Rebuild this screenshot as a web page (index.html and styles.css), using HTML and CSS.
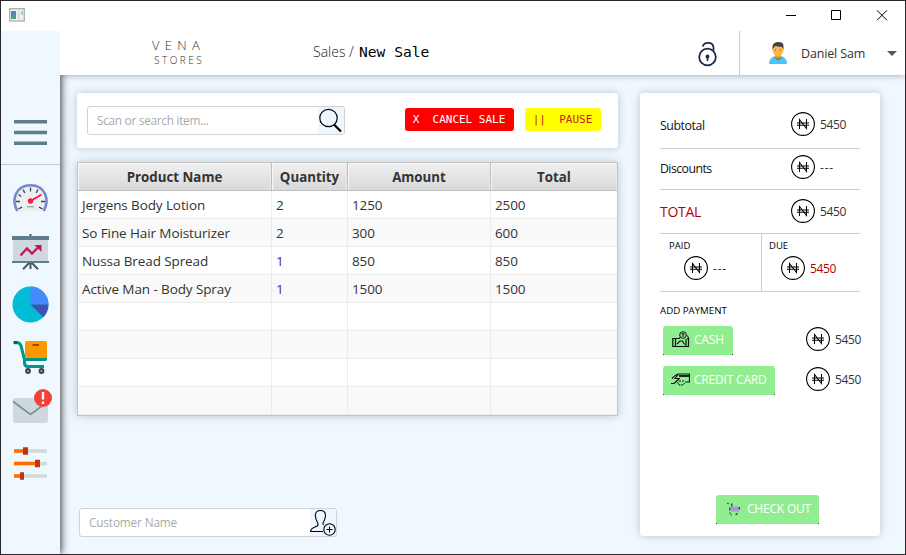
FILE: index.html
```html
<!DOCTYPE html>
<html lang="en">
<head>
<meta charset="utf-8">
<title>New Sale</title>
<link rel="stylesheet" href="styles.css">
</head>
<body>
<svg class="defs" width="0" height="0">
  <symbol id="naira" viewBox="0 0 24 24"><circle cx="12" cy="12" r="11.4" fill="none" stroke="#000" stroke-width="1.1"/><path d="M8.500 17V7.500L15.500 16.500V7M6 11H18M6 13.200H18" fill="none" stroke="#000" stroke-width="1.050"/></symbol>
</svg>
<div class="window">
  <div class="titlebar">
    <svg class="app-icon" width="16" height="14" viewBox="0 0 16 14"><rect x=".7" y=".7" width="14.6" height="12.3" fill="#eef0f2" stroke="#a9adb2" stroke-width="1.3"/><rect x="2" y="3" width="5" height="8" fill="#4a9a94"/><path d="M2 3h5v3L2 8z" fill="#5c86ad"/><rect x="8.5" y="3" width="2.5" height="8" fill="#d9dbdd"/><rect x="12" y="3" width="2" height="4" fill="#9ed0c0"/></svg>
    <svg class="controls" width="112" height="28" viewBox="785 1 112 28" fill="none" stroke="#000"><path d="M786 15.5H796M831.5 10.500H840.500V19.500H831.500ZM877 10.300L887 20.300M887 10.300L877 20.300"/></svg>
  </div>
  <div class="body">
    <nav class="sidebar">
      <svg class="menu" width="59" height="134" viewBox="1 31 59 134"><path d="M14 121.700H47M14 132.500H47M14 143.300H47" stroke="#607d8b" stroke-width="3.500"/></svg>
      <svg width="59" height="60" viewBox="1 165 59 60"><path d="M17.500 211C11 201 15 185.500 30.500 185.500S50 201 43.500 211Z" fill="#eceff1"/><path d="M17.300 211C11 200 15.500 185.300 30.500 185.300S50 200 43.700 211" fill="none" stroke="#7986cb" stroke-width="2.600"/><path d="M30.500 187.500v4M23 189.500l1.800 3.400M38 189.500l-1.800 3.400M18.600 194.500l2.600 2M16 201.500h4M41 201.500h4M18.500 209l3.500-1.800M42.500 209l-3.500-1.800" stroke="#37474f" stroke-width="1.300"/><path d="M30.500 201L41.500 194.500" stroke="#ff1744" stroke-width="1.800"/><circle cx="30.500" cy="201" r="2.700" fill="#ff1744"/><path d="M27 206.700h7" stroke="#90a4ae" stroke-width="1.300"/></svg>
      <svg width="59" height="53" viewBox="1 225 59 53"><path d="M30.500 234v3M30.500 262v7M30 262L23 269.300M31 262l7 7.300" stroke="#455a64" stroke-width="2"/><path d="M13 238H48V263H13z" fill="#cfd8dc"/><path d="M12 236H49v4H12zM12 261H49v2H12z" fill="#607d8b"/><path d="M20.500 255.500L27 248.500L32 253.500L39 246.500" fill="none" stroke="#c2185b" stroke-width="2.300"/><path d="M34.500 245H41.500V252z" fill="#c2185b"/></svg>
      <svg width="59" height="53" viewBox="1 278 59 53"><circle cx="30.500" cy="304.500" r="18" fill="#00bcd4"/><path d="M30.500 304.500V286.500A18 18 0 0 1 48.500 304.500Z" fill="#448aff"/><path d="M30.500 304.500H48.500A18 18 0 0 1 43.200 317.200Z" fill="#3f51b5"/></svg>
      <svg width="59" height="51" viewBox="1 331 59 51"><path d="M26 356H47V359.500Q47 361 45 361H26Z" fill="#009688"/><path d="M14 342.700H17.500Q20 342.700 21 346L24.500 359.500V363Q24.500 366.500 28 366.500H44" fill="none" stroke="#009688" stroke-width="3"/><path d="M13.500 341h4v3h-4z" fill="#00695c"/><rect x="25" y="341" width="22" height="17" rx="1.500" fill="#ff9800"/><path d="M32.500 345H39" stroke="#8f4700" stroke-width="1.800"/><g fill="#90a4ae" stroke="#37474f" stroke-width="1.800"><circle cx="28" cy="371" r="2"/><circle cx="41.500" cy="371" r="2"/></g></svg>
      <svg width="59" height="53" viewBox="1 382 59 53"><rect x="13" y="398" width="35" height="25" rx="2.500" fill="#cfd8dc"/><path d="M13 401.500L30.500 414.500L48 401.500" fill="none" stroke="#78909c" stroke-width="1.600"/><circle cx="43" cy="398" r="9" fill="#f44336"/><path d="M43 392v7.500M43 401.500v2.500" stroke="#fff" stroke-width="2.300"/></svg>
      <svg width="59" height="55" viewBox="1 435 59 55"><path d="M14 451H47M14 463.500H47M14 476H47" stroke="#cfd8dc" stroke-width="3.300"/><path d="M14 451H25M14 463.500H37M14 476H22" stroke="#ff6f00" stroke-width="3.300"/><path d="M23 447.300h5v7.400h-5zM35 459.800h5v7.400h-5zM20 472.300h4v7.400h-4z" fill="#bf360c"/></svg>
    </nav>
    <div class="content">
      <header class="topbar">
        <div class="brand"><div class="brand-name">VENA</div><div class="brand-sub">STORES</div></div>
        <div class="crumbs"><span class="crumb-parent">Sales /</span><span class="crumb-current">New Sale</span></div>
        <svg class="lock" width="24" height="28" viewBox="0 0 24 28" fill="none" stroke="#1c2650" stroke-width="1.800"><circle cx="11.500" cy="17" r="8.300"/><path d="M6.500 6.500Q8 2.800 12 2.800Q17.500 2.800 17.500 7.500V10.500"/><path d="M11.500 16v5" stroke-width="1.600"/><circle cx="11.500" cy="16.500" r="1" fill="#1c2650"/></svg>
        <div class="user">
          <svg class="avatar" width="20" height="24" viewBox="0 0 20 24"><path d="M1 23Q1 17 6 15.500L10 18L14 15.500Q19 17 19 23Z" fill="#4fc3f7"/><path d="M7 13h6v3.500Q10 20 7 16.500z" fill="#ff9800"/><path d="M6 15.700Q10 21 14 15.700" fill="none" stroke="#1579ad" stroke-width="1"/><ellipse cx="10" cy="8.800" rx="5.500" ry="6.200" fill="#ffb74d"/><path d="M4.500 8.500V5Q5.500 1 10.500 1Q15.500 1 15.500 5V8.500L14 6L7 5Z" fill="#424242"/><path d="M7 9h1.200M11.800 9H13" stroke="#784719"/></svg>
          <span class="user-name">Daniel Sam</span><span class="caret"></span>
        </div>
      </header>
      <main class="main">
        <section class="left">
          <div class="card toolbar">
            <div class="field search"><span>Scan or search item...</span><svg width="26" height="27" viewBox="0 0 26 27" fill="none" stroke="#000"><circle cx="10.500" cy="11" r="8.700" stroke-width="1.200"/><path d="M16 17.500L23 24.500" stroke-width="2.200"/></svg></div>
            <button class="btn-mono cancel">X&nbsp; CANCEL SALE</button>
            <button class="btn-mono pause">||&nbsp; PAUSE</button>
          </div>
          <div class="table">
            <div class="row head"><div>Product Name</div><div>Quantity</div><div>Amount</div><div>Total</div></div>
            <div class="row"><div>Jergens Body Lotion</div><div>2</div><div>1250</div><div>2500</div></div>
            <div class="row"><div>So Fine Hair Moisturizer</div><div>2</div><div>300</div><div>600</div></div>
            <div class="row"><div>Nussa Bread Spread</div><div class="one">1</div><div>850</div><div>850</div></div>
            <div class="row"><div>Active Man - Body Spray</div><div class="one">1</div><div>1500</div><div>1500</div></div>
            <div class="row"><div></div><div></div><div></div><div></div></div>
            <div class="row"><div></div><div></div><div></div><div></div></div>
            <div class="row"><div></div><div></div><div></div><div></div></div>
            <div class="row"><div></div><div></div><div></div><div></div></div>
          </div>
          <div class="field customer"><span>Customer Name</span><svg width="26" height="27" viewBox="0 0 26 27" fill="none" stroke="#000" stroke-width="1.100"><path d="M13 22.500H.7Q.5 20 3 19L7 17Q8.800 16 7.500 13.500Q5.500 10 5.300 6.500Q5.500 1.500 10.500 1.500T15.500 6.500Q15.300 10 13.500 13Q12.500 15 13.500 16"/><circle cx="19.500" cy="20.500" r="5.700" fill="#eef6ff"/><path d="M19.500 17.500v6M16.500 20.500h6"/></svg></div>
        </section>
        <aside class="card summary">
          <div class="line l1"><span class="label">Subtotal</span><svg class="coin"><use href="#naira"/></svg><span class="num">5450</span></div>
          <div class="line l2"><span class="label discounts">Discounts</span><svg class="coin"><use href="#naira"/></svg><span class="num dash">---</span></div>
          <div class="line l3"><span class="label total">TOTAL</span><svg class="coin"><use href="#naira"/></svg><span class="num">5450</span></div>
          <div class="split">
            <div class="half paid"><div class="cap">PAID</div><div class="money"><svg class="coin"><use href="#naira"/></svg><span class="num dash">---</span></div></div>
            <div class="half due"><div class="cap">DUE</div><div class="money"><svg class="coin"><use href="#naira"/></svg><span class="num red">5450</span></div></div>
          </div>
          <div class="add">ADD PAYMENT</div>
          <div class="pay"><button class="green cash"><svg width="18" height="17" viewBox="0 0 18 17" fill="none" stroke="#111" stroke-width="1"><path d="M7 7.500H.8v8h15.700v-8H15M3.500 8v7M14 8v7M5 13l3-3h2.500l2 3.500" stroke-width="1.200"/><circle cx="11" cy="4" r="3.300"/><path d="M11 2v4M9.500 3h3M14.500 4l2.500 3-2 1M8 6l-1 2"/></svg><span>CASH</span></button><svg class="coin"><use href="#naira"/></svg><span class="num">5450</span></div>
          <div class="pay"><button class="green credit"><svg width="19" height="13" viewBox="0 0 19 13" fill="none" stroke="#111" stroke-width="1"><path d="M0 10.500H3L8 6M1 5.500Q5 1 8 1H18.500V9H14M7.500 1L4 5.500H9" stroke-width="1.200"/><path d="M8 3h10" stroke-width="1.800"/><path d="M6.500 9l1.500 3h4l1.500-2M8 8h2M11 8h2" stroke-dasharray="2 .6"/></svg><span>CREDIT CARD</span></button><svg class="coin"><use href="#naira"/></svg><span class="num">5450</span></div>
          <button class="green checkout"><svg width="14" height="14" viewBox="0 0 14 14"><path d="M3 4.500H12V9.500H4z" fill="#a49bcf"/><path d="M.5 1l1 1M4.800 1.500v3M12.300 5v2.500M2.800 5.500v3M3 10.500v1.200M3.500 13h1.300M8.500 12.500h1.300M10 11v1.200" fill="none" stroke="#222" stroke-width="1.100"/></svg><span>CHECK OUT</span></button>
        </aside>
      </main>
    </div>
  </div>
</div>
</body>
</html>
```
FILE: styles.css
```css
* { box-sizing: border-box; }
body { margin: 0; font-family: "Open Sans", "Noto Sans", sans-serif; color: #333; }
button { border: 0; padding: 0; font: inherit; }
svg { display: block; flex: none; }
.defs { position: absolute; }
.window { width: 906px; height: 555px; border: 1px solid #29292d; display: flex; flex-direction: column; background: #fff; overflow: hidden; }
.titlebar { height: 30px; flex: none; display: flex; justify-content: space-between; padding: 0 8px; }
.app-icon { margin-top: 7px; }
.body { flex: 1; display: flex; min-height: 0; }
.sidebar { position: relative; width: 59px; flex: none; background: #f0f8ff; box-shadow: 1px 0 8px #333; clip-path: inset(0 -12px 0 0); }
.menu + svg { box-shadow: 0 -1px #c8c8c8; }
.content { flex: 1; display: flex; flex-direction: column; min-width: 0; background: #f0f8ff; }
.topbar { position: relative; height: 44px; flex: none; background: #fff; display: flex; box-shadow: 0 1px 6px rgba(0,0,0,.28); clip-path: inset(0 0 -10px 0); z-index: 1; }
.brand { width: 253px; padding: 5px 0 0 92px; font-weight: 300; color: #333; white-space: nowrap; }
.brand-name { font-size: 13px; line-height: 18px; letter-spacing: 5.3px; }
.brand-sub { font-size: 10px; line-height: 13px; letter-spacing: 2.500px; padding-left: 2px; }
.crumbs { width: 383px; display: flex; align-items: baseline; line-height: 42px; white-space: nowrap; }
.crumb-parent { font-size: 14px; font-weight: 300; width: 46px; color: #222; }
.crumb-current { font-family: "DejaVu Sans Mono", monospace; font-size: 14.600px; color: #000; }
.lock { margin-top: 9px; }
.user { margin-left: 19px; flex: 1; border-left: 1px solid #ccc; display: flex; align-items: center; padding-left: 28px; }
.user-name { font-size: 12.500px; margin-left: 13px; width: 86px; letter-spacing: -.15px; white-space: nowrap; }
.caret { border: 5px solid transparent; border-top-color: #555; border-bottom: 0; }
.main { flex: 1; display: flex; padding: 18px 0 0 17px; gap: 22px; }
.card { background: #fff; border-radius: 3px; box-shadow: 0 0 9px rgba(60,80,100,.3); }
.left { width: 541px; flex: none; }
.toolbar { height: 55px; display: flex; padding: 13px 0 0 10px; }
.field { width: 258px; height: 29px; background: #fff; border: 1px solid #d2d2d2; border-radius: 3px; display: flex; justify-content: space-between; overflow: hidden; font-size: 11.800px; line-height: 27px; color: #aaa; padding-left: 9px; letter-spacing: -.27px; }
.customer span { letter-spacing: -.15px; }
.field svg { background: #eef6ff; }
.btn-mono { font-family: "DejaVu Sans Mono", monospace; font-size: 11px; height: 23px; line-height: 22px; border-radius: 3px; margin-top: 2px; white-space: pre; }
.cancel { background: #f00; color: #fff; width: 109px; margin-left: 60px; padding-right: 1px; }
.pause { background: #ff0; color: #c51a1a; width: 76px; margin-left: 11px; padding-right: 1px; }
.table { margin-top: 14px; height: 254px; border: 1px solid #c4c4c4; background: #fff; box-shadow: 0 0 9px rgba(60,80,100,.3); }
.row { display: grid; grid-template-columns: 194px 76px 143px 1fr; height: 28px; font-size: 13.500px; line-height: 25px; }
.row > div { border-right: 1px solid #ececec; border-bottom: 1px solid #ececec; padding: 2px 4px 0; white-space: nowrap; letter-spacing: -.1px; }
.row > div:last-child { border-right: 0; }
.row:nth-child(odd) { background: #f9f9f9; }
.row > .one { color: #452d80; }
.row.head { background: linear-gradient(#f0f0f0, #d8d8d8); font-weight: 700; font-size: 13.300px; }
.row.head > div { text-align: center; letter-spacing: 0; border-color: #bfbfbf; box-shadow: inset 1px 1px #f6f6f6, inset -1px 0 #e8e8e8; }
.customer { margin: 92px 0 0 2px; }
.summary { width: 240px; height: 443px; padding: 14px 20px 0; }
.line { display: flex; align-items: center; border-bottom: 1px solid #ccc; color: #333; }
.l1 { height: 42px; padding-bottom: 7px; }
.l2 { height: 41px; padding-bottom: 4px; }
.l3 { height: 44px; padding-bottom: 1px; }
.label { width: 131px; font-size: 12.300px; color: #111; letter-spacing: -.4px; padding-top: 3px; }
.discounts { letter-spacing: -.55px; padding-top: 2px; }
.total { font-size: 14px; color: #b00000; letter-spacing: -.3px; padding-top: 1px; }
.coin { width: 24px; height: 24px; }
.num { font-size: 12px; letter-spacing: -.35px; margin-left: 5px; }
.dash { letter-spacing: .8px; }
.red { color: #b00000; }
.split { display: flex; height: 58px; border-bottom: 1px solid #ccc; }
.half { width: 101px; padding: 2px 0 0 9px; }
.due { border-left: 1px solid #ccc; width: 99px; padding-left: 7px; }
.cap { font-size: 9.500px; line-height: 19px; color: #000; }
.money { display: flex; align-items: center; padding-left: 15px; padding-top: 1px; }
.due .money { padding-left: 12px; }
.add { font-size: 9.700px; line-height: 16px; color: #000; margin-top: 11px; }
.pay { display: flex; align-items: center; height: 29px; margin: 7px 0 11px 3px; }
.pay .coin { margin-left: auto; margin-top: -3px; }
.pay .num { margin-right: -1px; margin-top: -3px; }
.green { background: linear-gradient(#1d5c1d, #1d5c1d) left bottom / 1px 1px no-repeat, linear-gradient(#1d5c1d, #1d5c1d) right bottom / 1px 1px no-repeat, #90ee90; color: #fff; border-radius: 3px 3px 0 0; height: 29px; display: flex; align-items: center; font-size: 12px; letter-spacing: -.2px; white-space: nowrap; padding-bottom: 2px; }
.cash { width: 70px; padding-left: 9px; gap: 4px; }
.credit { width: 112px; padding-left: 8px; gap: 4px; }
.checkout { width: 103px; margin: 100px 0 0 56px; padding-left: 11px; gap: 6px; }
```
